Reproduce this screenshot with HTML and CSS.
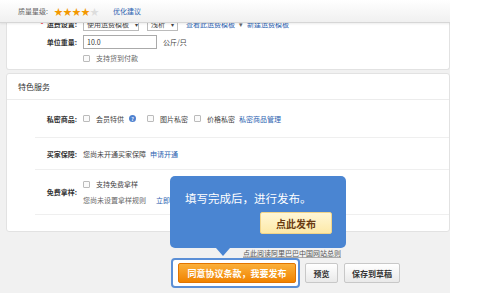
FILE: index.html
```html
<!DOCTYPE html>
<html lang="zh-CN">
<head>
    <meta charset="UTF-8">
    <title>发布产品</title>
    <link rel="stylesheet" href="styles.css">
</head>
<body>
    <div class="wrap">
        <div class="topbar">
            <span class="muted">质量星级:</span>
            <span class="stars">★★★★<span class="off">★</span></span>
            <a class="link" href="#">优化建议</a>
        </div>

        <div class="panel first">
            <div class="row cut">
                <span class="label"><i class="req">*</i>运费设置:</span>
                <span class="field">
                    <span class="select wide">使用运费模板 <b>▾</b></span>
                    <span class="select">浅析 <b>▾</b></span>
                    <a class="link" href="#">查看此运费模板</a>
                    <span class="muted">▾</span>
                    <a class="link" href="#">新建运费模板</a>
                </span>
            </div>
            <div class="row">
                <span class="label">单位重量:</span>
                <span class="field">
                    <span class="input">10.0</span>
                    <span>公斤/只</span>
                </span>
            </div>
            <div class="row">
                <span class="label"></span>
                <span class="field"><span class="check"></span><span class="muted">支持货到付款</span></span>
            </div>
        </div>

        <div class="panel second">
            <div class="panel-head">特色服务</div>
            <div class="line">
                <span class="label">私密商品:</span>
                <span class="field">
                    <span class="check"></span><span>会员特供</span>
                    <span class="help">?</span>
                    <span class="check"></span><span>图片私密</span>
                    <span class="check"></span><span>价格私密</span>
                    <a class="link" href="#">私密商品管理</a>
                </span>
            </div>
            <div class="line short">
                <span class="label">买家保障:</span>
                <span class="field">
                    <span>您尚未开通买家保障</span>
                    <a class="link" href="#">申请开通</a>
                </span>
            </div>
            <div class="line tall">
                <span class="label">免费拿样:</span>
                <div class="stack">
                    <span class="field"><span class="check"></span><span>支持免费拿样</span></span>
                    <span class="field">
                        <span class="muted">您尚未设置拿样规则</span>
                        <a class="link" href="#">立即设置</a>
                    </span>
                </div>
            </div>
        </div>

        <div class="actions">
            <a class="rules" href="#">点此阅读阿里巴巴中国网站总则</a>
            <div class="buttons">
                <span class="ring"><button class="btn-main">同意协议条款，我要发布</button></span>
                <button class="btn">预览</button>
                <button class="btn">保存到草稿</button>
            </div>
        </div>

        <div class="tip">
            <p>填写完成后，进行发布。</p>
            <button class="tip-btn">点此发布</button>
        </div>
    </div>
</body>
</html>
```

FILE: styles.css
```css
body {
    margin: 0;
    background: #fff;
    font-family: "Noto Sans CJK SC", "Noto Sans", sans-serif;
    font-size: 7px;
    color: #444;
    white-space: nowrap;
}
.wrap {
    position: relative;
    width: 444px;
    height: 293px;
    padding-left: 6px;
    background: #f1f1f1;
    overflow: hidden;
}
.link {
    color: #2b62b0;
    text-decoration: none;
}
.muted {
    color: #666;
}
.topbar {
    margin-left: -6px;
    height: 22px;
    padding-left: 18px;
    display: flex;
    align-items: center;
    gap: 6px;
    background: linear-gradient(#ffffff, #f0f0f0);
    border-bottom: 1px solid #d6d6d6;
    box-shadow: 0 1px 2px rgba(0, 0, 0, 0.08);
    position: relative;
    z-index: 2;
}
.stars {
    color: #f39800;
    font-size: 9px;
    margin-right: 8px;
}
.stars .off {
    color: #ddd;
}
.panel {
    background: #fff;
    border: 1px solid #e2e2e2;
    border-radius: 3px;
}
.first {
    border-top: none;
    border-radius: 0 0 3px 3px;
    height: 46px;
    overflow: hidden;
    display: flex;
    flex-direction: column;
    gap: 3px;
}
.row {
    display: flex;
    align-items: center;
    height: 14px;
    flex-shrink: 0;
}
.row.cut {
    margin-top: -6px;
}
.row:nth-child(2) {
    height: 16px;
}
.row:nth-child(3) {
    height: 10px;
}
.label {
    width: 70px;
    flex-shrink: 0;
    text-align: right;
    font-weight: bold;
    color: #333;
    margin-right: 6px;
}
.req {
    color: #e00;
    font-style: normal;
    margin-right: 3px;
}
.field {
    display: flex;
    align-items: center;
    gap: 4px;
}
.select {
    height: 11px;
    padding: 0 3px;
    border: 1px solid #bbb;
    display: flex;
    align-items: center;
    gap: 6px;
    margin-right: 4px;
}
.select.wide {
    width: 48px;
    justify-content: space-between;
}
.select b {
    font-size: 6px;
    font-weight: normal;
}
.input {
    width: 66px;
    height: 12px;
    line-height: 12px;
    padding: 0 3px;
    border: 1px solid #aaa;
    color: #333;
    margin-right: 2px;
}
.check {
    width: 5px;
    height: 5px;
    border: 1px solid #bbb;
    border-radius: 1px;
    background: #fafafa;
    margin-right: 2px;
}
.help {
    width: 7px;
    height: 7px;
    border-radius: 50%;
    background: #4f82d0;
    color: #fff;
    font-size: 5px;
    font-weight: bold;
    line-height: 7px;
    text-align: center;
    margin: 0 5px 0 1px;
}
.line .field .check:not(:first-child) {
    margin-left: 2px;
}
.second {
    margin-top: 3px;
    height: 157px;
}
.panel-head {
    height: 25px;
    padding-left: 11px;
    display: flex;
    align-items: center;
    font-size: 8px;
    color: #333;
    border-bottom: 1px solid #ececec;
}
.line {
    margin-left: 28px;
    height: 37px;
    display: flex;
    align-items: center;
    border-bottom: 1px solid #efefef;
}
.line .label {
    width: 42px;
}
.line.short {
    height: 31px;
}
.line.tall {
    height: 44px;
}
.stack {
    display: flex;
    flex-direction: column;
    gap: 6px;
}
.stack .field:last-child {
    gap: 10px;
}
.actions {
    display: flex;
    flex-direction: column;
    padding-top: 17px;
}
.rules {
    margin-left: 237px;
    color: #555;
    font-size: 7px;
    line-height: 9px;
    text-decoration: underline;
    text-decoration-color: #aaa;
}
.buttons {
    display: flex;
    align-items: center;
    gap: 5px;
    margin-left: 165px;
}
.ring {
    padding: 3px 2px 3px 5px;
    border: 2px solid #5b8fd6;
    border-radius: 4px;
    background: #fff;
    display: flex;
}
.btn-main {
    width: 118px;
    height: 20px;
    border: 1px solid #e27400;
    border-radius: 2px;
    background: linear-gradient(#fbb03b, #f08300);
    color: #fff;
    font-family: "Noto Sans CJK SC", serif;
    font-size: 9px;
    font-weight: bold;
    padding: 0;
}
.btn {
    height: 20px;
    width: 33px;
    padding: 0;
    border: 1px solid #c8c8c8;
    border-radius: 2px;
    background: linear-gradient(#ffffff, #e9e9e9);
    color: #333;
    font-family: "Noto Sans CJK SC", serif;
    font-size: 8px;
    font-weight: bold;
    white-space: nowrap;
}
.btn:last-child {
    width: 56px;
    margin-left: 1px;
}
.tip {
    position: absolute;
    left: 170px;
    top: 176px;
    width: 176px;
    height: 72px;
    box-sizing: border-box;
    padding: 14px 14px 0 15px;
    background: #4a85d2;
    border-radius: 5px;
    z-index: 3;
}
.tip::after {
    content: "";
    position: absolute;
    left: 46px;
    bottom: -8px;
    border-left: 7px solid transparent;
    border-right: 7px solid transparent;
    border-top: 8px solid #4a85d2;
}
.tip p {
    margin: 0;
    color: #fff;
    font-size: 11.5px;
    line-height: 16px;
}
.tip-btn {
    display: block;
    margin: 6px 0 0 75px;
    width: 72px;
    height: 22px;
    border: 1px solid #f0d48a;
    border-radius: 2px;
    background: linear-gradient(#fff7d6, #fde9a8);
    color: #6a3b12;
    font-family: "Noto Sans CJK SC", serif;
    font-size: 10px;
    font-weight: bold;
    padding: 0;
}
```
